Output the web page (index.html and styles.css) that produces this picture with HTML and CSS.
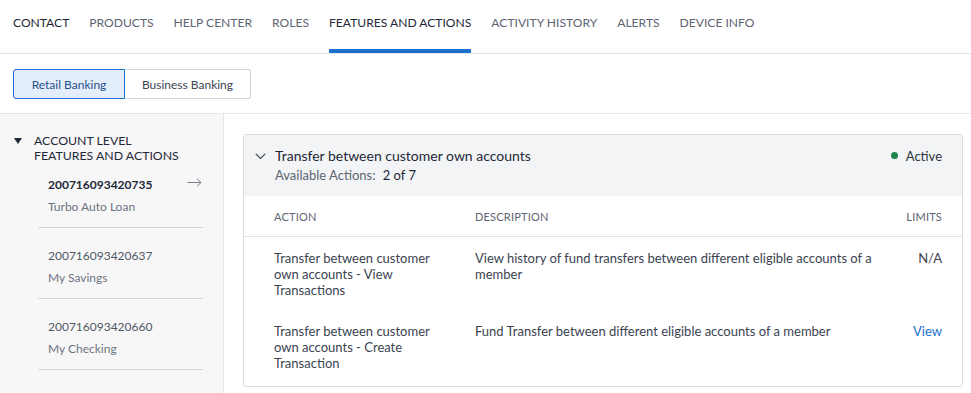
FILE: index.html
```html
<!DOCTYPE html>
<html>
<head>
<meta charset="utf-8">
<link rel="stylesheet" href="styles.css">
</head>
<body>
<nav class="tabs">
  <a class="tab dark">CONTACT</a>
  <a class="tab">PRODUCTS</a>
  <a class="tab">HELP CENTER</a>
  <a class="tab">ROLES</a>
  <a class="tab active">FEATURES AND ACTIONS</a>
  <a class="tab">ACTIVITY HISTORY</a>
  <a class="tab">ALERTS</a>
  <a class="tab">DEVICE INFO</a>
</nav>
<div class="segbar">
  <div class="seg">
    <button class="seg-btn on">Retail Banking</button>
    <button class="seg-btn">Business Banking</button>
  </div>
</div>
<div class="body">
  <aside class="side">
    <div class="side-head">
      <span class="tri"></span>
      <span class="side-title">ACCOUNT LEVEL FEATURES AND ACTIONS</span>
    </div>
    <ul class="accts">
      <li class="acct sel">
        <div class="acct-row"><span class="acct-no">200716093420735</span>
          <svg class="arrow" width="15" height="9" viewBox="0 0 15 9"><path d="M0.5 4.5H14M10 0.8L14 4.5L10 8.2" fill="none" stroke="#7a818c" stroke-width="1"/></svg>
        </div>
        <div class="acct-name">Turbo Auto Loan</div>
      </li>
      <li class="acct">
        <div class="acct-row"><span class="acct-no">200716093420637</span></div>
        <div class="acct-name">My Savings</div>
      </li>
      <li class="acct">
        <div class="acct-row"><span class="acct-no">200716093420660</span></div>
        <div class="acct-name">My Checking</div>
      </li>
    </ul>
  </aside>
  <main class="main">
    <section class="card">
      <header class="card-head">
        <div class="head-left">
          <svg class="chev" width="11" height="7" viewBox="0 0 11 7"><path d="M0.8 0.8L5.5 5.5L10.2 0.8" fill="none" stroke="#3d4757" stroke-width="1.2"/></svg>
          <div>
            <div class="card-title">Transfer between customer own accounts</div>
            <div class="avail">Available Actions: <b class="count">2 of 7</b></div>
          </div>
        </div>
        <div class="status"><span class="dot"></span>Active</div>
      </header>
      <div class="table">
        <div class="th">ACTION</div>
        <div class="th">DESCRIPTION</div>
        <div class="th right">LIMITS</div>
        <div class="td first">Transfer between customer own accounts - View Transactions</div>
        <div class="td first">View history of fund transfers between different eligible accounts of a member</div>
        <div class="td first right">N/A</div>
        <div class="td">Transfer between customer own accounts - Create Transaction</div>
        <div class="td">Fund Transfer between different eligible accounts of a member</div>
        <div class="td right"><a class="link">View</a></div>
      </div>
    </section>
  </main>
</div>
</body>
</html>
```

FILE: styles.css
```css
* { box-sizing: border-box; }
html, body { margin: 0; padding: 0; }
body {
  font-family: Lato, "Open Sans", sans-serif;
  color: #2b3442;
  background: #fff;
  width: 971px;
  height: 393px;
  overflow: hidden;
}
.tabs {
  display: flex;
  gap: 20px;
  padding-left: 13px;
  height: 54px;
  border-bottom: 1px solid #e2e4ec;
}
.tab {
  font-size: 12.1px;
  color: #5d6472;
  line-height: 45px;
  height: 53px;
  border-bottom: 4px solid transparent;
  cursor: pointer;
}
.tab.dark { color: #1f2838; }
.tab.active { color: #1f2838; border-bottom-color: #1a70cc; }
.segbar {
  padding: 15px 13px 14px;
  border-bottom: 1px solid #e6e6e8;
}
.seg { display: flex; }
.seg-btn {
  font-family: inherit;
  font-size: 12px;
  height: 30px;
  background: #fff;
  color: #3c4452;
  border: 1px solid #cfd3da;
  margin: 0;
  cursor: pointer;
}
.seg-btn:first-child {
  width: 112px;
  border-radius: 3px 0 0 3px;
}
.seg-btn:last-child {
  width: 126px;
  border-left: none;
  border-radius: 0 3px 3px 0;
}
.seg-btn.on {
  background: #e4eefa;
  border-color: #1a70cc;
  color: #1f4f8c;
}
.body { display: flex; height: 280px; }
.side {
  width: 224px;
  flex: none;
  background: #f7f7f7;
  border-right: 1px solid #e6e6e6;
  padding-top: 19px;
}
.side-head { display: flex; align-items: flex-start; padding-left: 14px; }
.tri {
  width: 0; height: 0;
  border-left: 4.5px solid transparent;
  border-right: 4.5px solid transparent;
  border-top: 6px solid #1f2838;
  margin-top: 5px;
  margin-right: 12px;
}
.side-title {
  font-size: 12.3px;
  line-height: 15px;
  color: #1f2838;
  width: 148px;
}
.accts { list-style: none; margin: 0; padding: 0 20px 0 38px; }
.acct {
  border-bottom: 1px solid #d6d6d8;
  padding: 13px 0 12px 10px;
  height: 71px;
}
.acct.sel { padding-top: 13px; height: 65px; }
.acct-row { display: flex; justify-content: space-between; align-items: center; height: 17px; }
.acct-no { font-size: 12px; color: #505866; }
.acct.sel .acct-no { font-weight: 700; color: #1f2838; }
.arrow { margin-right: 1px; margin-top: -4px; }
.acct-name { font-size: 12px; color: #6c7380; margin-top: 6px; }
.acct + .acct { padding-top: 19px; }
.main { flex: 1; padding: 20px 8px 0 19px; }
.card {
  border: 1px solid #d9dce2;
  border-radius: 3px;
  overflow: hidden;
}
.card-head {
  background: #f3f4f6;
  height: 61px;
  display: flex;
  justify-content: space-between;
  padding: 11px 20px 0 11px;
}
.head-left { display: flex; align-items: flex-start; }
.chev { margin-top: 7px; margin-right: 9px; }
.card-title { font-size: 14px; line-height: 19px; color: #1f2838; }
.avail { font-size: 13px; color: #5d6472; margin-top: 2px; }
.count { font-weight: 400; color: #1f2838; margin-left: 4px; }
.status { font-size: 13px; color: #2b3442; display: flex; align-items: center; height: 17px; margin-top: 1px; }
.dot { width: 7px; height: 7px; border-radius: 50%; background: #1e8449; margin-right: 8px; }
.table {
  display: grid;
  grid-template-columns: 201px 1fr auto;
  padding: 0 20px 3px 30px;
}
.th {
  font-size: 11px;
  color: #5d6472;
  height: 41px;
  line-height: 41px;
  border-bottom: 1px solid #e0e3e8;
  letter-spacing: 0.2px;
}
.table .th:first-child { margin-left: -30px; padding-left: 30px; }
.table .th.right { margin-right: -20px; padding-right: 20px; }
.td {
  font-size: 13px;
  line-height: 16px;
  color: #3b4350;
  padding: 13px 0 12px;
}
.td:nth-child(3n+1) { padding-right: 30px; }
.td:nth-child(3n+2) { padding-right: 20px; }
.right { text-align: right; }
.link { color: #1a70cc; }
```
